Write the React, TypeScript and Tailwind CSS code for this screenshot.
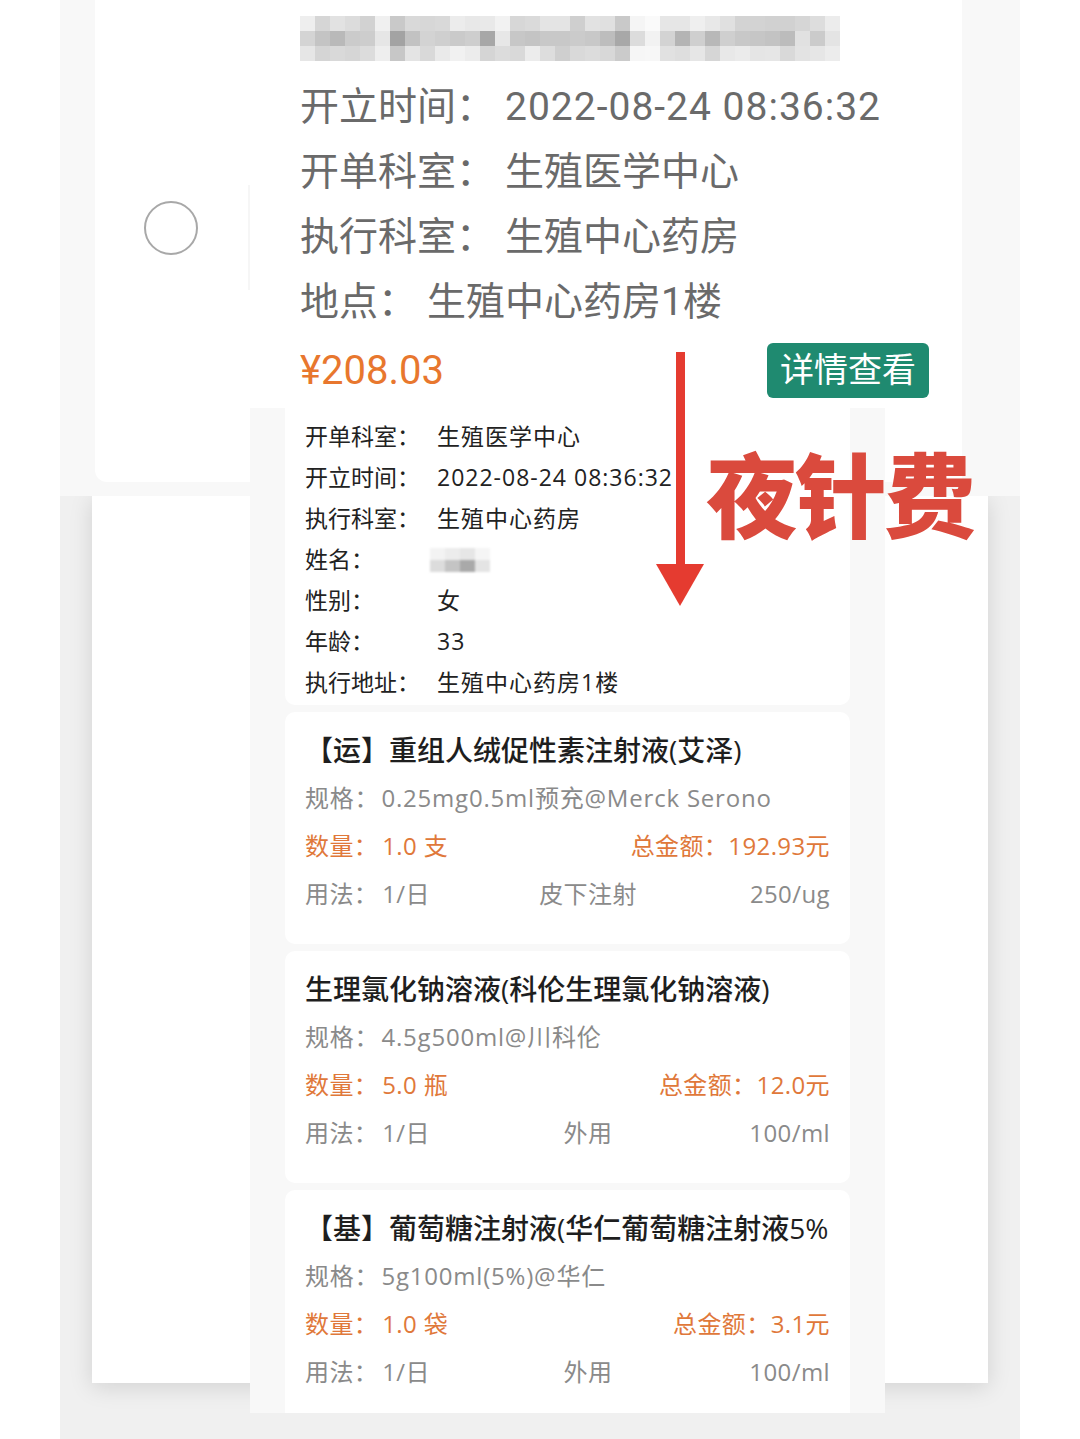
import React from "react";

const blurShades = [
  ["#eeeeee","#d6d6d6","#e2e2e2","#dcdcdc","#d2d2d2","#f0f0f0","#c9c9c9","#d9d9d9","#d7d7d7","#d9d9d9","#ececec","#e8e8e8","#e9e9e9","#f2f2f2","#d7d7d7","#dadada","#e4e4e4","#e4e4e4","#cfcfcf","#e2e2e2","#e0e0e0","#c9c9c9","#f5f5f5","#fafafa","#e6e6e6","#e6e6e6","#efefef","#e8e8e8","#e0e0e0","#d3d3d3","#d3d3d3","#d1d1d1","#d1d1d1","#d6d6d6","#dddddd","#ececec"],
  ["#d4d4d4","#c4c4c4","#b9b9b9","#cbcbcb","#cdcdcd","#e6e6e6","#a3a3a3","#c2c2c2","#d3d3d3","#cfcfcf","#cacaca","#cecece","#a7a7a7","#e7e7e7","#c7c7c7","#c4c4c4","#c8c8c8","#c8c8c8","#cbcbcb","#c8c8c8","#bdbdbd","#a8a8a8","#dcdcdc","#f2f2f2","#d3d3d3","#b4b4b4","#cfcfcf","#b8b8b8","#cfcfcf","#c8c8c8","#c6c6c6","#c3c3c3","#bcbcbc","#e1e1e1","#cbcbcb","#e4e4e4"],
  ["#e6e6e6","#d5d5d5","#d9d9d9","#d6d6d6","#dcdcdc","#eeeeee","#c7c7c7","#e4e4e4","#d9d9d9","#eaeaea","#f1f1f1","#ececec","#d5d5d5","#dcdcdc","#d9d9d9","#ececec","#dddddd","#cfcfcf","#d9d9d9","#dcdcdc","#d8d8d8","#cbcbcb","#f6f6f6","#f7f7f7","#e1e1e1","#dedede","#e6e6e6","#d6d6d6","#e8e8e8","#ebebeb","#e5e5e5","#e6e6e6","#d9d9d9","#e3e3e3","#e6e6e6","#ececec"],
];

const nameShades = [
  ["#f3f3f3", "#ececec", "#e6e6e6", "#f5f5f5"],
  ["#dcdcdc", "#c4c4c4", "#a9a9a9", "#e4e4e4"],
];

type Drug = {
  title: string;
  spec: string;
  qty: string;
  total: string;
  route: string;
  dose: string;
};

const drugs: Drug[] = [
  {
    title: "【运】重组人绒促性素注射液(艾泽)",
    spec: "0.25mg0.5ml预充@Merck Serono",
    qty: "1.0 支",
    total: "192.93元",
    route: "皮下注射",
    dose: "250/ug",
  },
  {
    title: "生理氯化钠溶液(科伦生理氯化钠溶液)",
    spec: "4.5g500ml@川科伦",
    qty: "5.0 瓶",
    total: "12.0元",
    route: "外用",
    dose: "100/ml",
  },
  {
    title: "【基】葡萄糖注射液(华仁葡萄糖注射液5%",
    spec: "5g100ml(5%)@华仁",
    qty: "1.0 袋",
    total: "3.1元",
    route: "外用",
    dose: "100/ml",
  },
];

const infoRows: [string, string | null][] = [
  ["开单科室：", "生殖医学中心"],
  ["开立时间：", "2022-08-24 08:36:32"],
  ["执行科室：", "生殖中心药房"],
  ["姓名：", null],
  ["性别：", "女"],
  ["年龄：", "33"],
  ["执行地址：", "生殖中心药房1楼"],
];

function DrugCard({ d }: { d: Drug }) {
  return (
    <div className="bg-white rounded-[10px] h-[232px] shrink-0 pt-[14px] px-[20px] flex flex-col">
      <div className="h-[48px] flex items-center text-[28px] font-medium text-[#1e1e1e] whitespace-nowrap">
        {d.title}
      </div>
      <div className="h-[48px] flex items-center text-[24px] text-[#8a8a8a] whitespace-nowrap tracking-[0.8px]">
        <span>规格：</span>
        <span className="ml-[2px]">{d.spec}</span>
      </div>
      <div className="h-[48px] flex items-center justify-between text-[24px] text-[#e0783a] whitespace-nowrap tracking-[0.4px]">
        <span>
          数量：<span className="ml-[4px]">{d.qty}</span>
        </span>
        <span>总金额：{d.total}</span>
      </div>
      <div className="h-[48px] grid grid-cols-[233px_100px_1fr] items-center text-[24px] text-[#8a8a8a] whitespace-nowrap tracking-[0.4px]">
        <span>
          用法：<span className="ml-[4px]">1/日</span>
        </span>
        <span className="text-center">{d.route}</span>
        <span className="text-right">{d.dose}</span>
      </div>
    </div>
  );
}

export default function App() {
  return (
    <div className="relative w-[1080px] h-[1439px] bg-white overflow-hidden font-['Roboto','Noto_Sans_CJK_SC',sans-serif]">
      {/* Top screenshot */}
      <div className="absolute left-[60px] top-0 w-[960px] h-[496px] bg-[#f8f8f8]">
        <div className="ml-[35px] w-[867px] h-[482px] bg-white rounded-bl-[12px] flex">
          <div className="w-[155px] h-full flex items-center relative">
            <div className="ml-[49px] mb-[26px] w-[54px] h-[54px] rounded-full border-[2px] border-[#a8a8a8]" />
            <div className="absolute right-0 top-[185px] h-[105px] w-[2px] bg-[#f6f6f6]" />
          </div>
          <div className="flex-1 pl-[50px] text-[39px] text-[#6a6a6a] leading-none">
            <div className="pt-[16px] pb-[14px] blur-[0.6px]">
              {blurShades.map((row, ri) => (
                <div key={ri} className="flex">
                  {row.map((c, ci) => (
                    <div key={ci} className="w-[15px] h-[15px]" style={{ backgroundColor: c }} />
                  ))}
                </div>
              ))}
            </div>
            <div className="flex flex-col">
              <div className="h-[65px] flex items-center whitespace-nowrap">
                <span>开立时间：</span>
                <span className="ml-[10px] tracking-[1px]">2022-08-24 08:36:32</span>
              </div>
              <div className="h-[65px] flex items-center whitespace-nowrap">
                <span>开单科室：</span>
                <span className="ml-[10px]">生殖医学中心</span>
              </div>
              <div className="h-[65px] flex items-center whitespace-nowrap">
                <span>执行科室：</span>
                <span className="ml-[10px]">生殖中心药房</span>
              </div>
              <div className="h-[65px] flex items-center whitespace-nowrap">
                <span>地点：</span>
                <span className="ml-[10px]">生殖中心药房1楼</span>
              </div>
              <div className="h-[70px] flex items-center justify-between pr-[33px]">
                <span className="text-[40px] text-[#e8772e] mt-[2px]">¥208.03</span>
                <span className="w-[162px] h-[55px] rounded-[6px] bg-[#1f8a70] text-white text-[34px] flex items-center justify-center">
                  详情查看
                </span>
              </div>
            </div>
          </div>
        </div>
      </div>

      {/* Bottom screenshot */}
      <div className="absolute left-[60px] top-[496px] w-[960px] h-[943px] bg-[#f0f0f0] overflow-hidden">
        <div className="ml-[32px] w-[896px] h-[887px] bg-white shadow-[0_4px_22px_rgba(0,0,0,0.13)]" />
      </div>

      {/* Overlay detail screenshot */}
      <div className="absolute left-[250px] top-[408px] w-[635px] h-[1005px] bg-[#f8f8f8] px-[35px] flex flex-col gap-[7px] overflow-hidden font-['Open_Sans','Noto_Sans_CJK_SC',sans-serif]">
        <div className="bg-white rounded-b-[10px] h-[297px] shrink-0 pt-[8px] px-[20px] text-[23px] text-[#222222]">
          {infoRows.map(([label, value]) => (
            <div key={label} className="h-[41px] flex items-center whitespace-nowrap">
              <span className="w-[132px]">{label}</span>
              {value === null ? (
                <div className="flex flex-col blur-[0.8px] -ml-[7px]">
                  {nameShades.map((row, ri) => (
                    <div key={ri} className="flex">
                      {row.map((c, ci) => (
                        <div key={ci} className="w-[15px] h-[12px]" style={{ backgroundColor: c }} />
                      ))}
                    </div>
                  ))}
                </div>
              ) : (
                <span className="tracking-[1px]">{value}</span>
              )}
            </div>
          ))}
        </div>
        {drugs.map((d, i) => (
          <DrugCard key={i} d={d} />
        ))}
      </div>

      {/* Red arrow annotation */}
      <svg className="absolute left-[650px] top-[350px]" width="60" height="260" viewBox="0 0 60 260">
        <rect x="26" y="2" width="9" height="218" fill="#e53b30" />
        <polygon points="6,214 54,214 30,256" fill="#e53b30" />
      </svg>

      {/* Big label */}
      <div className="absolute left-[706px] top-[445px] text-[92px] leading-none font-black tracking-[-3px] text-[#da4a3d] font-['Noto_Sans_CJK_SC',sans-serif] whitespace-nowrap">
        夜针费
      </div>
    </div>
  );
}
